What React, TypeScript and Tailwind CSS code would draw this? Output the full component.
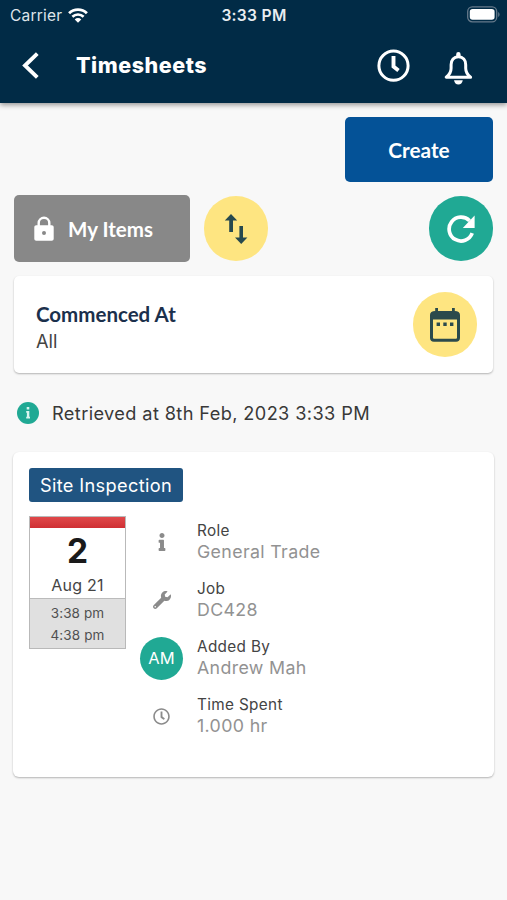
import { ReactNode } from "react";
import { FaInfo, FaWrench, FaRegClock } from "react-icons/fa";

interface DetailRowProps {
  icon: ReactNode;
  label: string;
  value: string;
}

function DetailRow({ icon, label, value }: DetailRowProps) {
  return (
    <div className="flex h-[58px] items-center">
      <div className="flex w-[43px] shrink-0 justify-center pt-[2px] text-[#8b8b8b]">{icon}</div>
      <div className="ml-[14px] whitespace-nowrap">
        <div className="text-[15.3px] leading-[20px] tracking-[0.35px] text-[#444]">{label}</div>
        <div className="text-[17.8px] leading-[21px] tracking-[0.35px] text-[#929292]">{value}</div>
      </div>
    </div>
  );
}

function StatusBar() {
  return (
    <div className="grid h-[30px] grid-cols-3 items-center pl-[10px] pr-[7px]">
      <div className="flex items-center">
        <span className="pt-px text-[15.5px] tracking-[0.2px] text-[#dfe5ea]">Carrier</span>
        <svg className="ml-[6px]" width="20" height="15" viewBox="0 0 21 16" fill="none">
          <path d="M1 5.6C6.2.5 14.8.5 20 5.6" stroke="white" strokeWidth="3" />
          <path d="M4.5 9.4c3.4-3.3 8.6-3.3 12 0" stroke="white" strokeWidth="2.8" />
          <path d="M10.5 15.6 7 12.2c2-1.9 5-1.9 7 0Z" fill="white" />
        </svg>
      </div>
      <span className="pr-[2px] pt-px text-center text-[15.6px] font-semibold tracking-[0.3px] text-[#e9edf1]">
        3:33 PM
      </span>
      <svg className="mb-[2px] justify-self-end" width="33" height="17" viewBox="0 0 33 17" fill="none">
        <rect x=".7" y=".9" width="29" height="15" rx="4.6" stroke="#65798a" strokeWidth="1.3" />
        <rect x="2.8" y="3" width="24.8" height="10.8" rx="2.8" fill="white" />
        <path d="M31.2 6v5c1.8-.8 1.8-4.2 0-5Z" fill="#65798a" />
      </svg>
    </div>
  );
}

function Header() {
  return (
    <header className="relative h-[103px] bg-[#012b46] text-white shadow-[0_2px_5px_rgba(0,0,0,0.4)]">
      <StatusBar />
      <div className="flex h-[72px] items-center pl-[21px] pr-[34px]">
        <svg width="20" height="30" viewBox="0 0 20 30" fill="none" stroke="white" strokeWidth="3.9">
          <path d="M16.3 2.6 4 14.5l12.3 11.8" />
        </svg>
        <h1 className="ml-[35px] mt-[-2px] text-[21.5px] font-extrabold tracking-[0.55px]">Timesheets</h1>
        <svg className="ml-auto" width="34" height="34" viewBox="0 0 34 34" fill="none" stroke="white">
          <circle cx="16.5" cy="16.7" r="14.6" strokeWidth="3" />
          <path d="M16.5 7v10.5l5 4" strokeWidth="3.9" />
        </svg>
        <svg className="ml-[33px] mt-[5px]" width="29" height="33" viewBox="0 0 29 33" fill="none">
          <path
            d="M14.4 4.8c-4.6 0-7.3 3.3-7.3 8v3.4c0 4-1.3 6.3-4.9 9h24.4c-3.6-2.7-4.9-5-4.9-9v-3.4c0-4.7-2.7-8-7.3-8Z"
            stroke="white"
            strokeWidth="3"
            strokeLinejoin="round"
          />
          <path d="M12.2 5V2.2a2.2 2.2 0 0 1 4.4 0V5M10 28.2h8.8c-.5 2.8-2.1 4.3-4.4 4.3s-3.9-1.5-4.4-4.3Z" fill="white" />
        </svg>
      </div>
    </header>
  );
}

function Toolbar() {
  return (
    <div className="mt-[13px] flex h-[67px] items-center">
      <button className="flex h-[67px] w-[176px] items-center rounded-[5px] bg-[#888] pl-[20px] text-white">
        <svg width="20" height="26" viewBox="0 0 20 26">
          <path
            fillRule="evenodd"
            fill="white"
            d="M2.3 9.2h1.2V7a6.5 6.5 0 0 1 13 0v2.2h1.2c1.2 0 2 .8 2 2v11.6c0 1.2-.8 2-2 2H2.3c-1.2 0-2-.8-2-2V11.2c0-1.2.8-2 2-2Zm3.6 0h8.2V7a4.1 4.1 0 0 0-8.2 0Zm4.1 5.8a2 2 0 1 0 0 4 2 2 0 0 0 0-4Z"
          />
        </svg>
        <span className="ml-[14px] pt-[2px] font-['Lato',sans-serif] text-[20.5px] font-bold">My Items</span>
      </button>
      <button className="ml-[13.5px] flex size-[64.5px] items-center justify-center rounded-full bg-[#fee581]">
        <svg width="24" height="30" viewBox="0 0 24 30" fill="#27494e">
          <path d="M7 0 13.2 6.5H9V18H5.2V6.5H.8ZM17.2 30l-6.2-6.5h4.4V12H19v11.5h4.4Z" />
        </svg>
      </button>
      <button className="ml-auto flex size-[64.5px] items-center justify-center rounded-full bg-[#20a994] text-white">
        <svg width="28" height="28" viewBox="0 0 28 28" fill="none">
          <path d="M25.2 18.2A11.9 11.9 0 1 1 22.6 5.8" stroke="white" strokeWidth="3.7" />
          <path d="M27.6.5v12.4H15.8Z" fill="white" />
        </svg>
      </button>
    </div>
  );
}

function CommencedCard() {
  return (
    <section className="mt-[14px] flex h-[97px] items-center justify-between rounded-[5px] bg-white pl-[22px] pr-[16px] shadow-[0_1px_2px_rgba(0,0,0,0.28)]">
      <div className="mt-[6px]">
        <h2 className="font-['Lato',sans-serif] text-[20.5px] font-bold leading-[27px] text-[#1b304c]">Commenced At</h2>
        <p className="text-[18.3px] leading-[27px] text-[#444]">All</p>
      </div>
      <button className="flex size-[64.5px] items-center justify-center rounded-full bg-[#fee581]">
        <svg width="32" height="34" viewBox="0 0 32 34" fill="#2b4a4c">
          <path
            fillRule="evenodd"
            d="M6.2 0H9v3h14V0h2.8v3.1c3.2 0 5.2 1.5 5.2 4V30c0 2.3-1.5 3.7-3.8 3.7H4.8C2.5 33.7 1 32.3 1 30V7.1c0-2.5 2-4 5.2-4ZM4 11.4v18c0 .9.5 1.4 1.4 1.4h21.2c.9 0 1.4-.5 1.4-1.4v-18Z"
          />
          <path d="M7.6 14.6H11V18H7.6ZM14.3 14.6h3.4V18h-3.4ZM21 14.6h3.4V18H21Z" />
        </svg>
      </button>
    </section>
  );
}

function DateTile() {
  return (
    <div className="h-[133px] w-[97px] shrink-0 border border-[#b9b9b9] bg-white text-center">
      <div className="h-[11px] bg-linear-to-b from-[#e0484a] to-[#cf2f33]" />
      <div className="h-[71px] border-b border-[#bbb]">
        <div className="pt-[4px] text-[33.5px] font-bold leading-[38px] text-[#1a1a1a]">2</div>
        <div className="mt-[3px] text-[16px] leading-[24px] tracking-[0.2px] text-[#444]">Aug 21</div>
      </div>
      <div className="h-[49px] bg-[#e0e0e0] pt-[3px] text-[13.5px] leading-[22px] tracking-[0.1px] text-[#505050]">
        <div>3:38 pm</div>
        <div>4:38 pm</div>
      </div>
    </div>
  );
}

export default function App() {
  return (
    <div className="h-[900px] w-[507px] overflow-hidden bg-[#f8f8f8] font-['Inter',sans-serif]">
      <Header />
      <main className="px-[14px] pt-[14px]">
        <div className="flex justify-end">
          <button className="h-[65px] w-[148px] rounded-[5px] bg-[#045297] pt-px font-['Lato',sans-serif] text-[20.8px] font-bold text-white">
            Create
          </button>
        </div>

        <Toolbar />
        <CommencedCard />

        <div className="mt-[28px] flex h-[24px] items-center pl-[3px]">
          <svg width="22" height="22" viewBox="0 0 22 22">
            <circle cx="11" cy="11" r="11" fill="#20a994" />
            <path d="M9.7 5h2.6v2.5H9.7ZM9.2 9h3.1v5.8h.7v1.7H9.2v-1.7h.7v-4.1h-.7Z" fill="#d8f5ef" />
          </svg>
          <p className="ml-[13px] whitespace-nowrap pt-[2px] text-[18.2px] tracking-[0.38px] text-[#393939]">
            Retrieved at 8th Feb, 2023 3:33 PM
          </p>
        </div>

        <section className="mx-[-1px] mt-[27px] h-[325px] rounded-[6px] bg-white px-[16px] pt-[16px] shadow-[0_1px_2px_rgba(0,0,0,0.28)]">
          <span className="flex h-[34px] w-[154px] items-center justify-center rounded-[3px] bg-[#205481] pt-[2px] text-[18.2px] tracking-[0.35px] text-white">
            Site Inspection
          </span>
          <div className="mt-[14px] flex">
            <DateTile />
            <div className="ml-[14px] mt-[-4px]">
              <DetailRow icon={<FaInfo size={18} />} label="Role" value="General Trade" />
              <DetailRow icon={<FaWrench size={18} />} label="Job" value="DC428" />
              <DetailRow
                icon={
                  <span className="flex size-[43px] items-center justify-center rounded-full bg-[#20a994] text-[16.5px] text-white">
                    AM
                  </span>
                }
                label="Added By"
                value="Andrew Mah"
              />
              <DetailRow icon={<FaRegClock size={17} />} label="Time Spent" value="1.000 hr" />
            </div>
          </div>
        </section>
      </main>
    </div>
  );
}
